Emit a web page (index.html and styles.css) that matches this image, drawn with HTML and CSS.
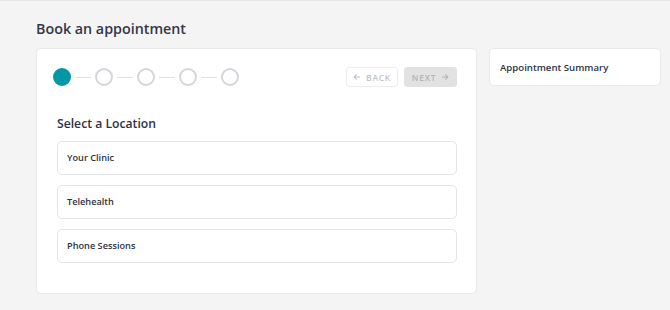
FILE: index.html
```html
<!DOCTYPE html>
<html>
<head>
<meta charset="utf-8">
<link rel="stylesheet" href="styles.css">
</head>
<body>
<div class="page">
  <h1 class="title">Book an appointment</h1>
  <div class="layout">
    <div class="card main">
      <div class="toolbar">
        <div class="stepper">
          <span class="step active"></span><span class="line"></span>
          <span class="step"></span><span class="line"></span>
          <span class="step"></span><span class="line"></span>
          <span class="step"></span><span class="line"></span>
          <span class="step"></span>
        </div>
        <div class="nav">
          <button class="btn back"><svg width="8" height="8" viewBox="0 0 8 8"><path d="M7 4H1.2M3.8 1.3L1.1 4l2.7 2.7" fill="none" stroke="currentColor" stroke-width="1.1"/></svg>BACK</button>
          <button class="btn next">NEXT<svg width="8" height="8" viewBox="0 0 8 8"><path d="M1 4h5.8M4.2 1.3L6.9 4 4.2 6.7" fill="none" stroke="currentColor" stroke-width="1.1"/></svg></button>
        </div>
      </div>
      <h2 class="section">Select a Location</h2>
      <div class="options">
        <div class="option">Your Clinic</div>
        <div class="option">Telehealth</div>
        <div class="option">Phone Sessions</div>
      </div>
    </div>
    <div class="card summary">Appointment Summary</div>
  </div>
</div>
</body>
</html>
```
FILE: styles.css
```css
html, body {
  margin: 0;
  padding: 0;
  background: #f4f4f5;
  font-family: "Open Sans", "Noto Sans", sans-serif;
  color: #2e3142;
}
body {
  border-top: 1px solid #e6e6e8;
  height: 309px;
  box-sizing: border-box;
}
.page {
  padding: 18px 9px 0 36px;
}
.title {
  margin: 0 0 9px;
  font-size: 14.3px;
  line-height: 20px;
  font-weight: 600;
  color: #33364a;
}
.layout {
  display: flex;
  align-items: flex-start;
  gap: 12px;
}
.card {
  flex-shrink: 0;
  background: #fff;
  border: 1px solid #e9e9ec;
  border-radius: 5px;
  box-sizing: border-box;
}
.main {
  width: 441px;
  height: 246px;
  padding: 18px 19px 0 20px;
}
.summary {
  width: 172px;
  height: 38px;
  padding: 0 10px;
  font-size: 9.6px;
  font-weight: 600;
  line-height: 38px;
  color: #2e3142;
}
.toolbar {
  display: flex;
  justify-content: space-between;
  align-items: center;
  height: 20px;
}
.stepper {
  display: flex;
  align-items: center;
  margin-left: -4px;
}
.step {
  width: 18px;
  height: 18px;
  border: 2px solid #d5d6db;
  border-radius: 50%;
  box-sizing: border-box;
}
.step.active {
  background: #0097a7;
  border-color: #0097a7;
}
.line {
  width: 16px;
  height: 1px;
  margin: 0 4px;
  background: #e0e0e4;
}
.nav {
  display: flex;
  gap: 6px;
}
.btn {
  display: flex;
  align-items: center;
  justify-content: center;
  gap: 5px;
  height: 20px;
  padding: 0;
  border-radius: 3px;
  font-family: inherit;
  font-size: 8.5px;
  font-weight: 600;
  letter-spacing: 0.7px;
}
.back {
  width: 52px;
  background: #fff;
  border: 1px solid #ececef;
  color: #c4c4c8;
}
.next {
  width: 53px;
  background: #e2e2e3;
  border: 1px solid #e2e2e3;
  color: #b4b4b8;
}
.section {
  margin: 27px 0 7px;
  font-size: 12.2px;
  line-height: 20px;
  font-weight: 600;
  color: #2e3142;
}
.options {
  display: flex;
  flex-direction: column;
  gap: 10px;
}
.option {
  height: 34px;
  border: 1px solid #e5e5e8;
  border-radius: 5px;
  box-sizing: border-box;
  padding: 0 9px;
  line-height: 32px;
  font-size: 9.2px;
  font-weight: 600;
  color: #2e3142;
}
```
